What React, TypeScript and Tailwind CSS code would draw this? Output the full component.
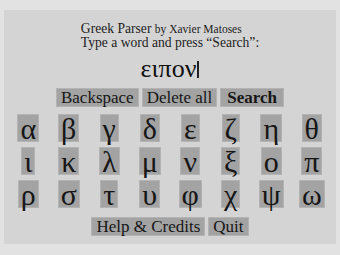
import React from "react";

const rows = [
  ["α", "β", "γ", "δ", "ε", "ζ", "η", "θ"],
  ["ι", "κ", "λ", "μ", "ν", "ξ", "ο", "π"],
  ["ρ", "σ", "τ", "υ", "φ", "χ", "ψ", "ω"],
];

function Key({ children, className = "" }: { children: React.ReactNode; className?: string }) {
  return (
    <button
      type="button"
      className={`bg-[#a3a3a3] border border-[#b3b3b3] text-[#161616] ${className}`}
    >
      {children}
    </button>
  );
}

export default function App() {
  return (
    <div className="w-[340px] h-[255px] bg-[#e2e2e2] pt-[10px] px-[4px] overflow-hidden">
      <div className="h-[234px] bg-[#d4d4d4] flex flex-col items-center font-['Liberation_Serif',serif] text-[#1c1c1c]">
        {/* title */}
        <div className="mt-[12px] text-[13.6px] leading-[13px] text-left">
          <p>
            Greek Parser <span className="text-[11.5px]">by Xavier Matoses</span>
          </p>
          <p>Type a word and press “Search”:</p>
        </div>

        {/* current word */}
        <div className="mt-[9px] h-[24px] flex items-end text-[26px] leading-none text-[#111]">
          <span>ειπον</span>
          <span className="w-[2px] h-[17px] bg-[#222] mb-[4px] ml-[1px]"></span>
        </div>

        <div className="mt-[6px] flex gap-[3px] text-[17px] leading-[17px]">
          <Key className="px-[4px] h-[19px]">Backspace</Key>
          <Key className="px-[4px] h-[19px]">Delete all</Key>
          <Key className="px-[6px] h-[19px] font-bold">Search</Key>
        </div>

        {/* letter keys */}
        <div className="mt-[7px] w-full px-[4px] grid grid-cols-8 gap-y-[5px] justify-items-center">
          {rows.flat().map((ch) => (
            <Key key={ch} className="h-[28px] px-[2px] text-[30px] leading-[28px]">
              {ch}
            </Key>
          ))}
        </div>

        <div className="mt-[9px] flex gap-[3px] text-[17px] leading-[17px]">
          <Key className="px-[4px] h-[19px]">Help &amp; Credits</Key>
          <Key className="px-[4px] h-[19px]">Quit</Key>
        </div>
      </div>
    </div>
  );
}
